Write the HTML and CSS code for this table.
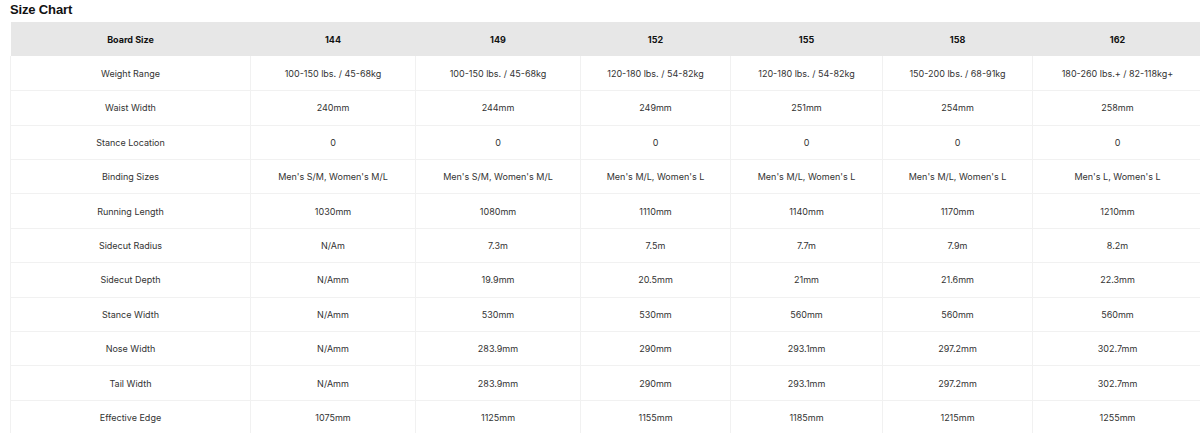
FILE: index.html
```html
<!DOCTYPE html>
<html>
<head>
<meta charset="utf-8">
<link rel="stylesheet" href="styles.css">
</head>
<body>
<div class="page">
  <h2 class="title">Size Chart</h2>
  <table class="chart">
    <colgroup>
      <col class="c-label">
      <col class="c-a">
      <col class="c-a">
      <col class="c-b">
      <col class="c-c">
      <col class="c-b">
      <col class="c-d">
    </colgroup>
    <thead>
      <tr><th>Board Size</th><th>144</th><th>149</th><th>152</th><th>155</th><th>158</th><th>162</th></tr>
    </thead>
    <tbody>
      <tr><td>Weight Range</td><td>100-150 lbs. / 45-68kg</td><td>100-150 lbs. / 45-68kg</td><td>120-180 lbs. / 54-82kg</td><td>120-180 lbs. / 54-82kg</td><td>150-200 lbs. / 68-91kg</td><td>180-260 lbs.+ / 82-118kg+</td></tr>
      <tr><td>Waist Width</td><td>240mm</td><td>244mm</td><td>249mm</td><td>251mm</td><td>254mm</td><td>258mm</td></tr>
      <tr><td>Stance Location</td><td>0</td><td>0</td><td>0</td><td>0</td><td>0</td><td>0</td></tr>
      <tr><td>Binding Sizes</td><td>Men's S/M, Women's M/L</td><td>Men's S/M, Women's M/L</td><td>Men's M/L, Women's L</td><td>Men's M/L, Women's L</td><td>Men's M/L, Women's L</td><td>Men's L, Women's L</td></tr>
      <tr><td>Running Length</td><td>1030mm</td><td>1080mm</td><td>1110mm</td><td>1140mm</td><td>1170mm</td><td>1210mm</td></tr>
      <tr><td>Sidecut Radius</td><td>N/Am</td><td>7.3m</td><td>7.5m</td><td>7.7m</td><td>7.9m</td><td>8.2m</td></tr>
      <tr><td>Sidecut Depth</td><td>N/Amm</td><td>19.9mm</td><td>20.5mm</td><td>21mm</td><td>21.6mm</td><td>22.3mm</td></tr>
      <tr><td>Stance Width</td><td>N/Amm</td><td>530mm</td><td>530mm</td><td>560mm</td><td>560mm</td><td>560mm</td></tr>
      <tr><td>Nose Width</td><td>N/Amm</td><td>283.9mm</td><td>290mm</td><td>293.1mm</td><td>297.2mm</td><td>302.7mm</td></tr>
      <tr><td>Tail Width</td><td>N/Amm</td><td>283.9mm</td><td>290mm</td><td>293.1mm</td><td>297.2mm</td><td>302.7mm</td></tr>
      <tr><td>Effective Edge</td><td>1075mm</td><td>1125mm</td><td>1155mm</td><td>1185mm</td><td>1215mm</td><td>1255mm</td></tr>
    </tbody>
  </table>
</div>
</body>
</html>
```
FILE: styles.css
```css
html, body {
  margin: 0;
  padding: 0;
  background: #ffffff;
  overflow: hidden;
}
.page {
  padding: 0 0 0 10px;
  font-family: Inter, "Liberation Sans", Arial, sans-serif;
  color: #333333;
}
.title {
  margin: 0;
  padding-top: 2px;
  height: 20px;
  font-family: "Liberation Sans", Arial, sans-serif;
  font-size: 13px;
  line-height: 16px;
  font-weight: 700;
  color: #111111;
  letter-spacing: -0.15px;
}
.chart {
  table-layout: fixed;
  width: 1192px;
  border-collapse: collapse;
  font-size: 9px;
}
.c-label { width: 240px; }
.c-a { width: 165px; }
.c-b { width: 150px; }
.c-c { width: 152px; }
.c-d { width: 170px; }
.chart th,
.chart td {
  height: 34.4px;
  padding: 0 4px;
  text-align: center;
  vertical-align: middle;
  box-sizing: border-box;
}
.chart thead th {
  background: #e7e7e7;
  color: #111111;
  font-weight: 700;
  border: none;
}
.chart tbody td {
  border: 1px solid #f1f1f1;
  border-top: none;
  color: #333333;
}
```
